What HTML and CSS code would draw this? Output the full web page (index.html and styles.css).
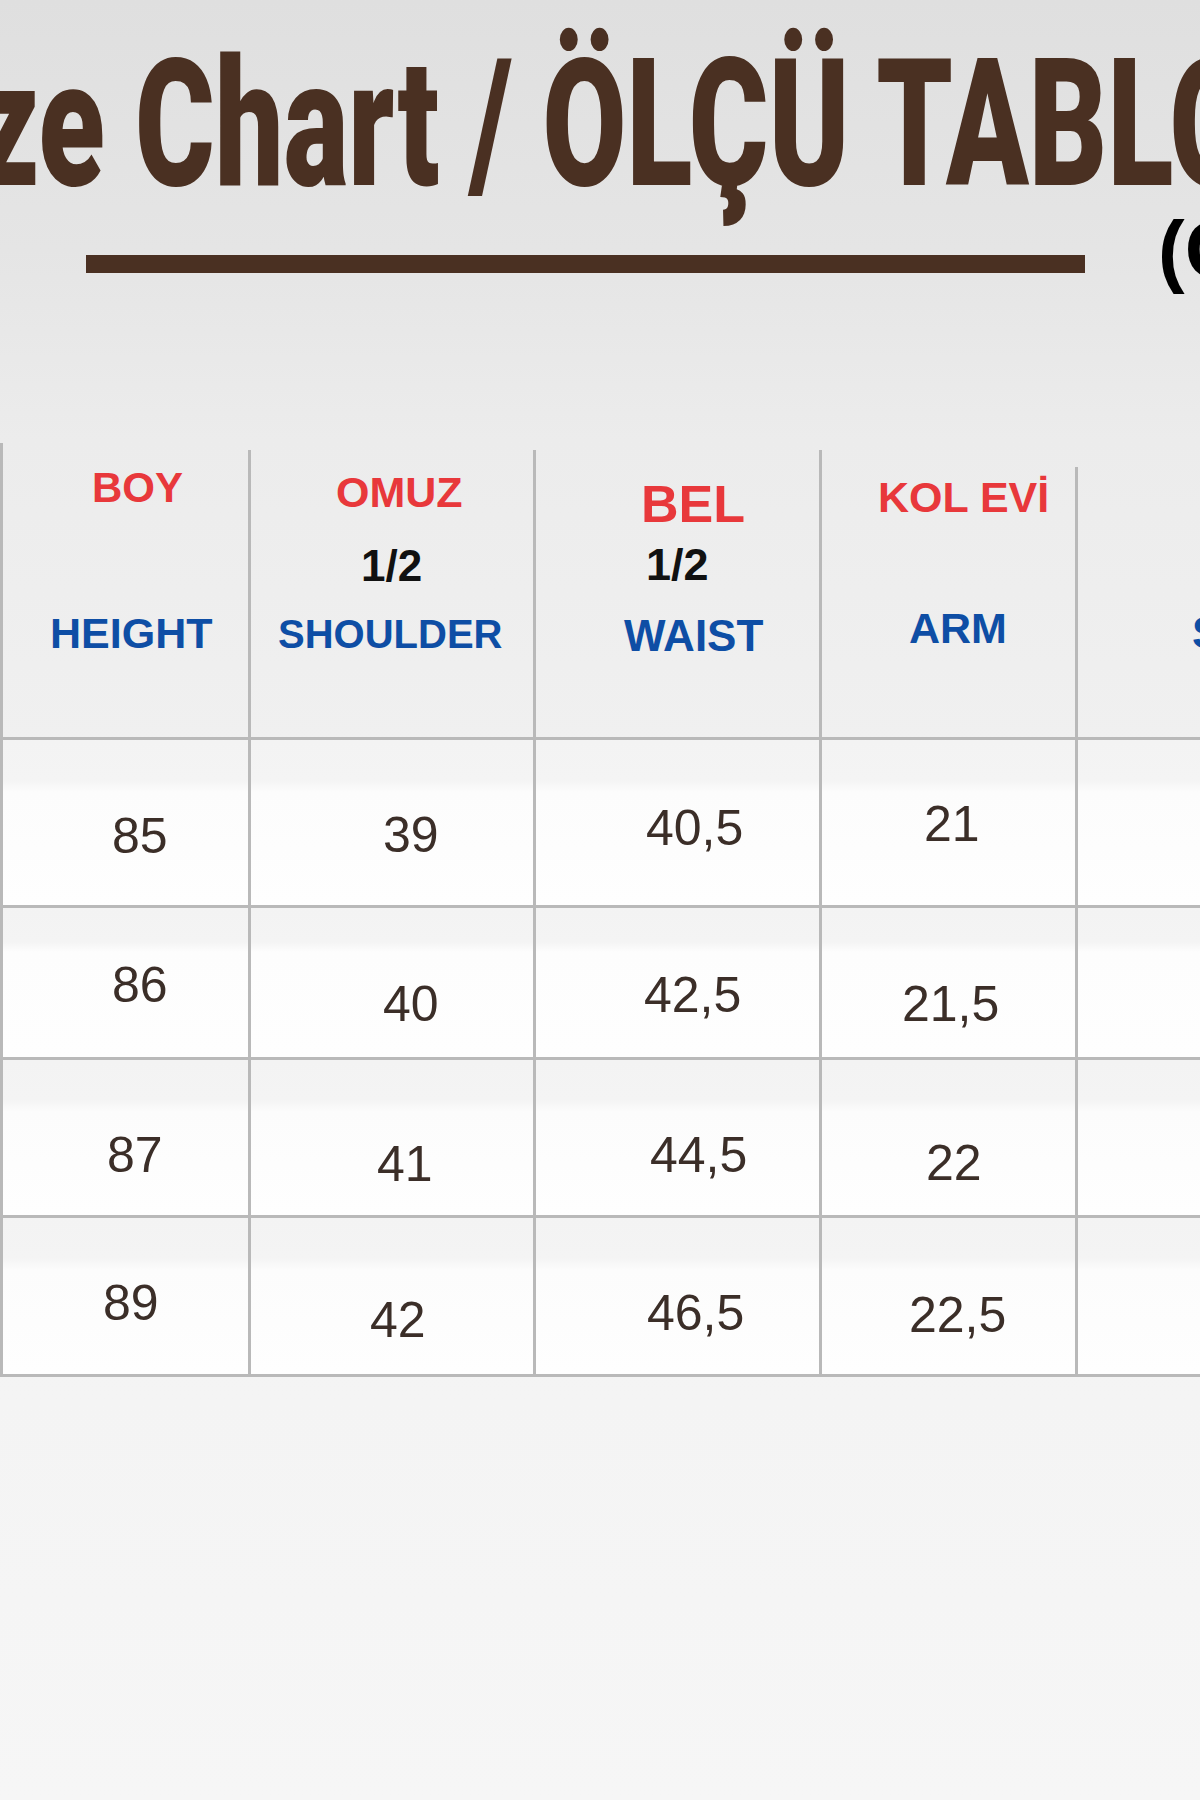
FILE: index.html
```html
<!DOCTYPE html>
<html lang="tr">
<head>
<meta charset="utf-8">
<title>Size Chart / ÖLÇÜ TABLOSU</title>
<link rel="stylesheet" href="styles.css">
</head>
<body>
<div class="page">
  <header class="head">
    <div class="title-row">
      <h1 class="title">Size Chart / ÖLÇÜ TABLOSU</h1>
    </div>
    <div class="sub-row">
      <div class="bar"></div>
      <div class="unit">(CM)</div>
    </div>
  </header>

  <section class="chart">
    <div class="hrow">
      <div class="hcell h1">
        <div class="lbl red boy">BOY</div>
        <div class="lbl blue height">HEIGHT</div>
      </div>
      <div class="hcell h2">
        <div class="lbl red omuz">OMUZ</div>
        <div class="lbl black half1">1/2</div>
        <div class="lbl blue shoulder">SHOULDER</div>
      </div>
      <div class="hcell h3">
        <div class="lbl red bel">BEL</div>
        <div class="lbl black half2">1/2</div>
        <div class="lbl blue waist">WAIST</div>
      </div>
      <div class="hcell h4">
        <div class="lbl red kol">KOL EVİ</div>
        <div class="lbl blue arm">ARM</div>
      </div>
      <div class="hcell h5">
        <div class="lbl blue sleeve">SLEEVE</div>
      </div>
    </div>

    <div class="brow r1">
      <div class="cell"><span class="num n11">85</span></div>
      <div class="cell"><span class="num n12">39</span></div>
      <div class="cell"><span class="num n13">40,5</span></div>
      <div class="cell"><span class="num n14">21</span></div>
      <div class="cell"></div>
    </div>
    <div class="brow r2">
      <div class="cell"><span class="num n21">86</span></div>
      <div class="cell"><span class="num n22">40</span></div>
      <div class="cell"><span class="num n23">42,5</span></div>
      <div class="cell"><span class="num n24">21,5</span></div>
      <div class="cell"></div>
    </div>
    <div class="brow r3">
      <div class="cell"><span class="num n31">87</span></div>
      <div class="cell"><span class="num n32">41</span></div>
      <div class="cell"><span class="num n33">44,5</span></div>
      <div class="cell"><span class="num n34">22</span></div>
      <div class="cell"></div>
    </div>
    <div class="brow r4">
      <div class="cell"><span class="num n41">89</span></div>
      <div class="cell"><span class="num n42">42</span></div>
      <div class="cell"><span class="num n43">46,5</span></div>
      <div class="cell"><span class="num n44">22,5</span></div>
      <div class="cell"></div>
    </div>
  </section>
</div>
</body>
</html>
```

FILE: styles.css
```css
*, *::before, *::after {
  box-sizing: border-box;
}
html, body {
  margin: 0;
  padding: 0;
}
body {
  width: 1200px;
  height: 1800px;
  overflow: hidden;
  background: linear-gradient(to bottom, #dfdfdf 0px, #e5e5e5 250px, #ececec 440px, #f0f0f0 740px, #f4f4f4 1400px, #f6f6f6 1800px);
  font-family: "Liberation Sans", Arial, sans-serif;
}
.page {
  width: 1200px;
  height: 1800px;
  overflow: hidden;
}

/* ---------- title ---------- */
.title-row {
  padding-top: 35px;
  height: 214px;
  white-space: nowrap;
}
.title {
  margin: 0 0 0 -133px;
  display: inline-block;
  font-family: Roboto, "Liberation Sans", sans-serif;
  font-weight: 900;
  font-size: 179px;
  line-height: 179px;
  color: #4a3022;
  transform: scaleX(0.68);
  transform-origin: 0 0;
}
.sub-row {
  display: flex;
  align-items: flex-start;
  margin-top: -4px;
  height: 80px;
}
.bar {
  flex-shrink: 0;
  margin: 45px 0 0 86px;
  width: 999px;
  height: 18px;
  background: #4a3022;
}
.unit {
  flex-shrink: 0;
  margin-left: 73px;
  font-weight: 700;
  font-size: 80px;
  line-height: 80px;
  color: #000;
  white-space: nowrap;
}

/* ---------- chart ---------- */
.chart {
  margin-top: 153px;
}
.hrow, .brow {
  display: grid;
  grid-template-columns: 248px 285px 286px 256px 125px;
  border-bottom: 3px solid #b9b9b9;
}
.hrow {
  height: 297px;
  align-items: end;
}
.hcell {
  border-left: 3px solid #b9b9b9;
  display: flex;
  flex-direction: column;
  align-items: flex-start;
}
.h1 { height: 294px; }
.h2, .h3, .h4 { height: 287px; }
.h5 { height: 270px; }

.lbl {
  font-weight: 700;
  line-height: 1;
  white-space: nowrap;
}
.red { color: #e8383b; }
.blue { color: #0e4ea5; }
.black { color: #111; }

.boy { font-size: 42px; margin: 24px 0 0 89px; }
.height { font-size: 43px; margin: 103px 0 0 47px; }
.omuz { font-size: 43px; margin: 21px 0 0 85px; }
.half1 { font-size: 44px; margin: 30px 0 0 110px; }
.shoulder { font-size: 40px; margin: 26px 0 0 27px; }
.bel { font-size: 52px; margin: 28px 0 0 105px; }
.half2 { font-size: 45px; margin: 12px 0 0 110px; }
.waist { font-size: 44px; margin: 27px 0 0 88px; }
.kol { font-size: 43px; margin: 26px 0 0 56px; }
.arm { font-size: 43px; margin: 88px 0 0 87px; }
.sleeve { font-size: 44px; margin: 144px 0 0 114px; }

.brow {
  background: linear-gradient(to bottom, #f3f3f3 0px, #f4f4f4 40px, #fcfcfc 52px, #fefefe 100%);
}
.r1 { height: 168px; }
.r2 { height: 152px; background: linear-gradient(to bottom, #f3f3f3 0px, #f4f4f4 34px, #fdfdfd 44px, #fefefe 100%); }
.r3 { height: 158px; }
.r4 { height: 159px; }
.brow .cell {
  border-left: 3px solid #b9b9b9;
}
.num {
  display: block;
  font-size: 50px;
  line-height: 1;
  color: #3b2e28;
  white-space: nowrap;
}
.n11 { margin: 71px 0 0 109px; }
.n12 { margin: 70px 0 0 132px; }
.n13 { margin: 63px 0 0 110px; }
.n14 { margin: 59px 0 0 102px; }
.n21 { margin: 52px 0 0 109px; }
.n22 { margin: 71px 0 0 132px; }
.n23 { margin: 62px 0 0 108px; }
.n24 { margin: 71px 0 0 80px; }
.n31 { margin: 70px 0 0 104px; }
.n32 { margin: 79px 0 0 126px; }
.n33 { margin: 70px 0 0 114px; }
.n34 { margin: 78px 0 0 104px; }
.n41 { margin: 60px 0 0 100px; }
.n42 { margin: 77px 0 0 119px; }
.n43 { margin: 70px 0 0 111px; }
.n44 { margin: 72px 0 0 87px; }
```
